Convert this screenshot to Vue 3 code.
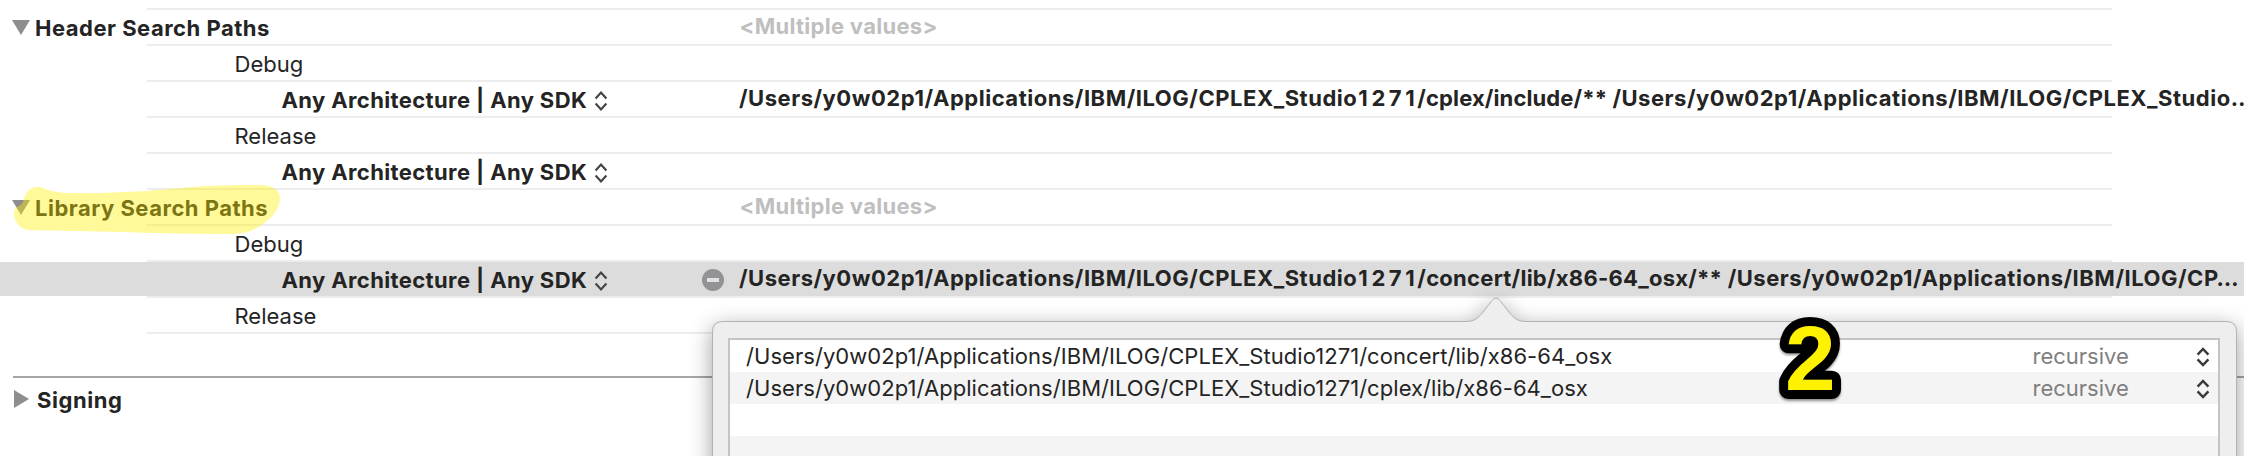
<script setup>
const sdk = 'Any Architecture | Any SDK'
const studio = '/Users/y0w02p1/Applications/IBM/ILOG/CPLEX_Studio'
const rows = [
  { kind: 'setting', label: 'Header Search Paths', value: [{ text: '<Multiple values>' }] },
  { kind: 'config', label: 'Debug' },
  {
    kind: 'arch',
    label: sdk,
    value: [{ text: studio }, { text: '1271', tone: 'digits' }, { text: '/cplex/include/** ', tone: 'tight' }, { text: studio + '…' }],
  },
  { kind: 'config', label: 'Release' },
  { kind: 'arch', label: sdk },
  { kind: 'setting', label: 'Library Search Paths', value: [{ text: '<Multiple values>' }] },
  { kind: 'config', label: 'Debug' },
  {
    kind: 'arch',
    label: sdk,
    selected: true,
    value: [{ text: studio }, { text: '1271', tone: 'digits' }, { text: '/concert/lib/x86-64_osx/** ', tone: 'snug' }, { text: '/Users/y0w02p1/Applications/IBM/ILOG/CP…' }],
  },
  { kind: 'config', label: 'Release' },
]
const paths = [
  '/Users/y0w02p1/Applications/IBM/ILOG/CPLEX_Studio1271/concert/lib/x86-64_osx',
  '/Users/y0w02p1/Applications/IBM/ILOG/CPLEX_Studio1271/cplex/lib/x86-64_osx',
]
</script>

<template>
  <main class="editor">
    <section class="settings">
      <div v-for="(row, i) in rows" :key="i" class="row" :class="[row.kind, { selected: row.selected }]">
        <div class="label">
          <svg v-if="row.kind === 'setting'" class="triangle" width="18" height="15" viewBox="0 0 18 15"><path d="M0 0H18L9 15Z" /></svg>
          <span>{{ row.label }}</span>
          <svg v-if="row.kind === 'arch'" class="chevrons" width="14" height="20" viewBox="0 0 14 20"><path d="M1.600 7.400L7 1.600L12.400 7.400M1.600 12.600L7 18.400L12.400 12.600" /></svg>
        </div>
        <div class="remove">
          <svg v-if="row.selected" width="22" height="22" viewBox="0 0 22 22"><circle cx="11" cy="11" r="11" /><rect x="5" y="9" width="12" height="4" /></svg>
        </div>
        <div class="value"><span v-for="(part, p) in row.value" :key="p" :class="part.tone">{{ part.text }}</span></div>
      </div>
    </section>

    <section class="group">
      <svg width="15" height="18" viewBox="0 0 15 18"><path d="M0 0L15 9L0 18Z" /></svg>
      <span>Signing</span>
    </section>

    <svg class="highlight" width="280" height="60" viewBox="0 0 280 60">
      <path d="M27 8.500C30 4 36 1.500 43 4C50 7 57 8.500 67 9C95 9.500 120 8.500 147 7C172 5.500 190 2.500 214 1.800C230 1 250 .800 263 1.200C274 1.600 280 7 280 14C280 22 275 30 268 36C260 43 252 47.500 241 49.200C232 50.200 224 50 214 50C150 49.500 90 46.500 31 46.200C22 46.200 15 40 14 31C14 26 15 24 18 22.500C21 21 23 19 24 15C24.500 12 25 10.500 27 8.500Z" />
    </svg>

    <aside class="popover">
      <svg class="frame" width="1526" height="220" viewBox="0 0 1526 220">
        <path d="M.5 220V34.500Q.5 24.500 10.500 24.500H753C762 24.500 765 22 770 16.500L780 3.500Q784 -1.500 788 3.500L798 16.500C803 22 806 24.500 815 24.500H1514.500Q1524.500 24.500 1524.500 34.500V220" />
      </svg>
      <div class="table">
        <div v-for="path in paths" :key="path" class="entry">
          <div class="path"><span>{{ path }}</span></div>
          <span class="mode">recursive</span>
          <svg class="chevrons" width="14" height="20" viewBox="0 0 14 20"><path d="M1.600 7.600L7 2L12.400 7.600M1.600 12.400L7 18L12.400 12.400" /></svg>
        </div>
        <div class="entry"></div>
        <div class="entry"></div>
      </div>
    </aside>

    <svg class="step" width="80" height="110" viewBox="0 0 80 110">
      <text x="15" y="80">2</text>
    </svg>
  </main>
</template>

<style scoped>
.editor {
  position: relative;
  width: 2244px;
  height: 456px;
  overflow: hidden;
  background: #fff;
  color: #242424;
  font: 400 22px/36px Inter, "Liberation Sans", sans-serif;
  white-space: nowrap;
}
.settings {
  padding-top: 10px;
  background: linear-gradient(#ededed, #ededed) 147px 8px / 1965px 2px no-repeat;
}
.row {
  display: grid;
  grid-template-columns: 702px 37px 1505px;
  height: 36px;
  background: linear-gradient(#ededed, #ededed) 147px 34px / 1965px 2px no-repeat;
}
.row.selected {
  background:
    linear-gradient(#dcdcdc, #dcdcdc) 0 0 / 100% 34px no-repeat,
    linear-gradient(#ededed, #ededed) 147px 34px / 1965px 2px no-repeat;
}
.label { display: flex; height: 36px; }
.setting .label { padding-left: 12px; font-weight: 700; letter-spacing: .5px; }
.config .label { padding-left: 234.500px; }
.arch .label { padding-left: 281.500px; font-weight: 700; letter-spacing: .38px; }
.triangle { margin: 10px 5px 0 0; fill: #8e8e8e; }
.chevrons { fill: none; stroke: #444; stroke-width: 2.200; }
.label .chevrons { margin: 9px 0 0 7px; }
.remove svg { display: block; margin-top: 7px; fill: #929297; }
.remove rect { fill: #e2e2e2; }
.value {
  overflow: hidden;
  height: 32px;
  line-height: 32px;
  font-weight: 700;
  letter-spacing: .53px;
  white-space: pre;
}
.value .digits { margin-left: 1px; margin-right: -1px; letter-spacing: 3.600px; }
.value .tight { letter-spacing: .12px; }
.value .snug { letter-spacing: .26px; }
.setting .value { padding-left: .500px; color: #bfbfbf; letter-spacing: .28px; }
.group {
  display: flex;
  margin: 42px 0 0 13px;
  padding-left: 1px;
  border-top: 2px solid #a6a6a6;
  line-height: 44px;
  font-weight: 700;
  letter-spacing: .55px;
}
.group svg { margin: 12px 8px 0 0; fill: #8e8e8e; }
.highlight { position: absolute; left: 0; top: 184px; fill: #fff000; fill-opacity: .4; }
.popover { position: absolute; left: 712px; top: 297px; width: 1525px; height: 159px; }
.frame { position: absolute; left: 0; top: 0; overflow: visible; filter: drop-shadow(0 6px 11px rgba(0, 0, 0, .38)); }
.frame path { fill: #eee; stroke: #b2b2b2; }
.table {
  position: relative;
  margin: 41px 17px 0 16px;
  border: 2px solid #c4c4c4;
  border-bottom: 0;
  background: #fff;
}
.entry {
  display: grid;
  grid-template-columns: 1286.500px 163.500px 14px;
  height: 32px;
  padding-left: 16px;
  line-height: 32px;
}
.entry:nth-child(even) { background: #f4f4f4; }
.path { letter-spacing: .05px; }
.mode { color: #7f7f7f; justify-self: start; }
.entry .chevrons { margin-top: 7px; stroke: #3a3a3a; stroke-width: 2.500; }
.step {
  position: absolute;
  left: 1770px;
  top: 310px;
  overflow: visible;
  font: 700 91px "Liberation Sans", sans-serif;
  fill: #fff200;
  stroke: #000;
  stroke-width: 18;
  stroke-linejoin: round;
  paint-order: stroke;
  filter: drop-shadow(0 2px 1px rgba(0, 0, 0, .4));
}
</style>
